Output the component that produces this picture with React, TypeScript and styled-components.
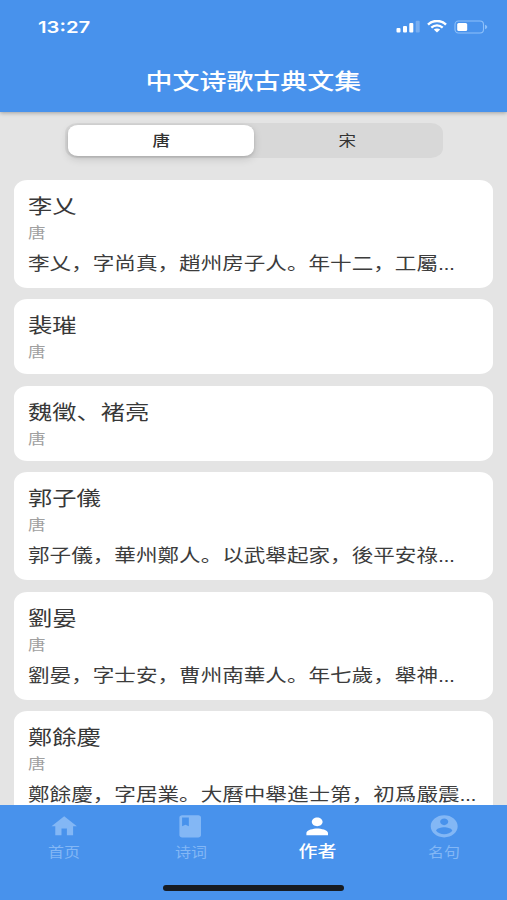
import React from "react";
import styled, { createGlobalStyle } from "styled-components";

const BLUE = "#4892ec";

const GlobalStyle = createGlobalStyle`
  *, *::before, *::after { box-sizing: border-box; }
  body {
    margin: 0;
    background: #e4e4e4;
    font-family: "Noto Sans CJK SC", sans-serif;
  }
`;

const Screen = styled.div`
  display: flex;
  flex-direction: column;
  width: 507px;
  height: 900px;
  overflow: hidden;
  background: #e4e4e4;
`;

/* Wide-set text: glyphs are drawn 22% wider than they are tall. */
const Wide = styled.span<{ $origin?: "left" | "center" }>`
  display: block;
  width: max-content;
  white-space: nowrap;
  transform: scaleX(1.22);
  transform-origin: ${(p) => p.$origin ?? "center"} center;
`;

const Header = styled.header`
  display: flex;
  flex-direction: column;
  flex: none;
  height: 111.5px;
  background: ${BLUE};
  color: #fff;
  box-shadow: 0 1px 4px rgba(0, 0, 0, 0.3);
  z-index: 1;
`;

const StatusBar = styled.div`
  display: flex;
  align-items: center;
  justify-content: space-between;
  height: 53px;
  padding: 0 19px 0 38px;
`;

const Clock = styled(Wide)`
  font: 600 16.6px/20px Inter, sans-serif;
`;

const StatusIcons = styled.div`
  display: flex;
  align-items: center;
  gap: 7px;

  svg { display: block; }
`;

const TitleBar = styled.div`
  display: flex;
  align-items: center;
  justify-content: center;
  height: 51px;
  padding-left: 0.4px;
`;

const Title = styled(Wide)`
  font-size: 22.1px;
  line-height: 30px;
  font-weight: 500;
`;

const Segments = styled.div`
  display: grid;
  grid-template-columns: 1fr 1fr;
  flex: none;
  width: 378px;
  height: 35.5px;
  margin: 11px 0 21.6px 65.3px;
  padding: 2.5px 2.5px;
  border-radius: 12px / 10px;
  background: #d8d8d8;
`;

const Segment = styled.button<{ $active?: boolean }>`
  display: flex;
  align-items: center;
  justify-content: center;
  padding: 0;
  border: 0;
  border-radius: 10px / 8px;
  font: ${(p) => (p.$active ? 500 : 400)} 14.4px/20px "Noto Sans CJK SC", sans-serif;
  color: #333;
  background: ${(p) => (p.$active ? "#fff" : "transparent")};
  box-shadow: ${(p) => (p.$active ? "0 3px 8px rgba(0,0,0,.14), 0 1px 3px rgba(0,0,0,.12)" : "none")};
`;

const List = styled.main`
  display: flex;
  flex-direction: column;
  flex: 1;
  min-height: 0;
  gap: 11.1px;
  padding: 0 13.6px 0 14.4px;
  overflow: hidden;
`;

const Card = styled.article<{ $tall: boolean }>`
  flex: none;
  height: ${(p) => (p.$tall ? 108.5 : 75.3)}px;
  padding: 12.3px 14px 0;
  border-radius: 13.5px / 11px;
  background: #fff;
`;

const Name = styled(Wide)`
  height: 28px;
  font-size: 19.9px;
  line-height: 28px;
  color: #383838;
`;

const Dynasty = styled(Wide)`
  height: 23.8px;
  font-size: 14.4px;
  line-height: 24.5px;
  color: #a0a0a0;
`;

const Bio = styled(Wide)`
  font-size: 17.7px;
  line-height: 37.5px;
  color: #3c3c3c;
`;

const Dots = styled.span`
  font-family: "Liberation Sans", sans-serif;
  letter-spacing: -0.4px;
`;

const Footer = styled.footer`
  display: flex;
  flex-direction: column;
  align-items: center;
  flex: none;
  height: 95.5px;
  padding-left: 0.8px;
  background: ${BLUE};
`;

const Tabs = styled.nav`
  display: grid;
  grid-template-columns: repeat(4, 1fr);
  width: 100%;
  height: 80px;
`;

const Tab = styled.a<{ $active?: boolean }>`
  display: flex;
  flex-direction: column;
  align-items: center;
  padding-top: 8px;
  color: ${(p) => (p.$active ? "#fff" : "#83b7f5")};

  svg { display: block; width: 32.4px; height: 26.6px; }
`;

const TabLabel = styled(Wide)<{ $active?: boolean }>`
  margin-top: ${(p) => (p.$active ? 1.2 : 2.5)}px;
  font-size: ${(p) => (p.$active ? 15.5 : 13.1)}px;
  line-height: 20px;
  font-weight: ${(p) => (p.$active ? 500 : 400)};
`;

const HomeIndicator = styled.div`
  width: 181px;
  height: 5.6px;
  border-radius: 3px;
  background: #171c23;
  margin-top: 0.5px;
`;

const authors: { name: string; bio?: string }[] = [
  { name: "李乂", bio: "李乂，字尚真，趙州房子人。年十二，工屬" },
  { name: "裴璀" },
  { name: "魏徵、褚亮" },
  { name: "郭子儀", bio: "郭子儀，華州鄭人。以武舉起家，後平安祿" },
  { name: "劉晏", bio: "劉晏，字士安，曹州南華人。年七歲，舉神" },
  { name: "鄭餘慶", bio: "鄭餘慶，字居業。大曆中舉進士第，初爲嚴震" },
];

const tabs = [
  { label: "首页", path: "M10 20v-6h4v6h4.6v-8H21.4L12 3 2.6 12h2.8v8z" },
  {
    label: "诗词",
    path: "M18 2H6c-1.1 0-2 .9-2 2v16c0 1.1.9 2 2 2h12c1.1 0 2-.9 2-2V4c0-1.1-.9-2-2-2zM6 4h5v8l-2.5-1.5L6 12V4z",
  },
  {
    label: "作者",
    active: true,
    path: "M12 12c2.21 0 4-1.79 4-4s-1.79-4-4-4-4 1.79-4 4 1.79 4 4 4zm0 2c-2.67 0-8 1.34-8 4v2h16v-2c0-2.66-5.33-4-8-4z",
  },
  {
    label: "名句",
    path: "M12 2C6.48 2 2 6.48 2 12s4.48 10 10 10 10-4.48 10-10S17.52 2 12 2zm0 3c1.66 0 3 1.34 3 3s-1.34 3-3 3-3-1.34-3-3 1.34-3 3-3zm0 14.2c-2.5 0-4.71-1.28-6-3.22.03-1.99 4-3.08 6-3.08 1.99 0 5.97 1.09 6 3.08-1.29 1.94-3.5 3.22-6 3.22z",
  },
];

export default function App() {
  return (
    <>
      <GlobalStyle />
      <Screen>
        <Header>
          <StatusBar>
            <Clock $origin="left">13:27</Clock>
            <StatusIcons>
              <svg width="24" height="13" viewBox="0 0 24 13" fill="#fff">
                <rect x="0.5" y="8" width="4" height="4.5" rx="1" />
                <rect x="7" y="6" width="4" height="6.5" rx="1" />
                <rect x="13.3" y="3" width="4" height="9.5" rx="1" />
                <rect x="19.7" y="0.7" width="4" height="11.8" rx="1" opacity="0.25" />
              </svg>
              <svg width="20" height="13" viewBox="0 0 20 13" fill="none" stroke="#fff">
                <path d="M1 4.6C6-.2 14-.2 19 4.6" strokeWidth="2.5" />
                <path d="M4.3 7.7c3.3-3 8.1-3 11.4 0" strokeWidth="2.3" />
                <path d="M6.8 9.6c1.8-1.6 4.6-1.6 6.4 0L10 12.6z" fill="#fff" stroke="none" />
              </svg>
              <svg width="34" height="14" viewBox="0 0 34 14" fill="none">
                <rect x="1" y="1" width="28.5" height="12" rx="3.5" stroke="#8dc0fa" strokeWidth="1.1" />
                <path d="M31 4.8c3 .8 3 3.6 0 4.4z" fill="#8dc0fa" />
                <rect x="3.2" y="3" width="10" height="8" rx="1.5" fill="#fff" />
              </svg>
            </StatusIcons>
          </StatusBar>
          <TitleBar>
            <Title>中文诗歌古典文集</Title>
          </TitleBar>
        </Header>
        <Segments>
          <Segment $active><Wide>唐</Wide></Segment>
          <Segment><Wide>宋</Wide></Segment>
        </Segments>
        <List>
          {authors.map((a) => (
            <Card key={a.name} $tall={!!a.bio}>
              <Name $origin="left">{a.name}</Name>
              <Dynasty $origin="left">唐</Dynasty>
              {a.bio && (
                <Bio $origin="left">{a.bio}<Dots>...</Dots></Bio>
              )}
            </Card>
          ))}
        </List>
        <Footer>
          <Tabs>
            {tabs.map((t) => (
              <Tab key={t.label} $active={t.active}>
                <svg viewBox="0 0 24 24" preserveAspectRatio="none" fill="currentColor">
                  <path d={t.path} />
                </svg>
                <TabLabel $active={t.active}>{t.label}</TabLabel>
              </Tab>
            ))}
          </Tabs>
          <HomeIndicator />
        </Footer>
      </Screen>
    </>
  );
}
